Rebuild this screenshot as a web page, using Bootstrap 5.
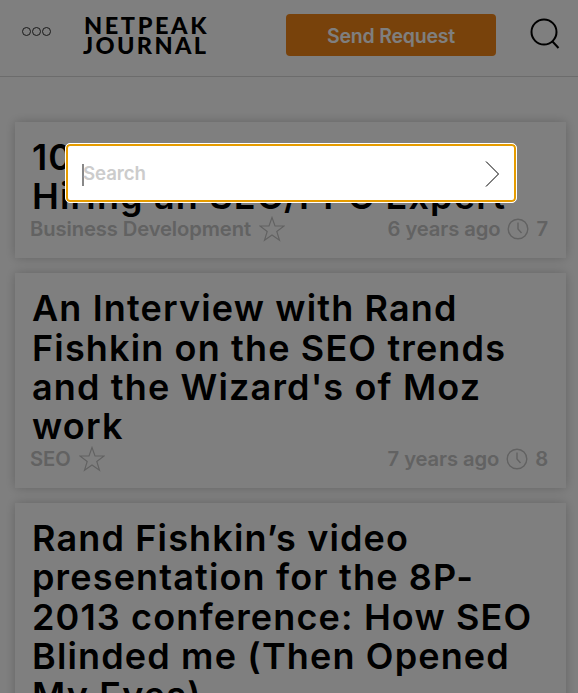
<!DOCTYPE html>
<html lang="en">
<head>
    <meta charset="UTF-8">
    <meta name="viewport" content="width=device-width, initial-scale=1.0">
    <title>Netpeak Journal</title>
    <link href="https://cdn.jsdelivr.net/npm/bootstrap@5.3.0/dist/css/bootstrap.min.css" rel="stylesheet">
    <style>
        html, body { height: 100%; overflow: hidden; }
        body {
            background-color: #fff;
            color: #000;
            font-family: "Inter", "Liberation Sans", sans-serif;
        }
        .top-bar {
            height: 77px;
            border-bottom: 1px solid #d9d9d9;
            padding: 14px 18px 0 22px;
        }
        .dots { width: 30px; gap: 1px; margin-top: 13px; }
        .dots i { width: 9px; height: 9px; border: 1px solid #333; border-radius: 50%; display: block; }
        .logo {
            font-family: "Lato", sans-serif;
            font-weight: 900;
            font-size: 23.5px;
            line-height: 20px;
            letter-spacing: 2.6px;
            margin-left: 32px;
            margin-top: 1px;
        }
        .logo-row2 { margin-left: -1px; letter-spacing: 2.35px; }
        .send-btn {
            width: 210px;
            height: 42px;
            margin-left: auto;
            padding-top: 4px;
            background: #f18416;
            color: #fff;
            border: 0;
            border-radius: 4px;
            font-size: 19.5px;
            font-weight: 600;
            letter-spacing: -.2px;
        }
        .search-ico { margin-left: 34px; margin-top: 4px; }
        .post-list { padding: 45px 12px 0 15px; gap: 15px; }
        .post-card {
            border: 0;
            border-radius: 0;
            background: #fff;
            padding: 16px 18px 16px 17px;
            box-shadow: 0 0 10px rgba(0,0,0,.22);
        }
        .post-title {
            font-family: "Inter", sans-serif;
            font-size: 36px;
            font-weight: 600;
            line-height: 39.2px;
            letter-spacing: 1.15px;
            margin: 0;
        }
        .post-meta {
            color: #c4c4c4;
            font-size: 20.2px;
            font-weight: 600;
            line-height: 26px;
            letter-spacing: -.1px;
            margin-left: -2px;
        }
        .clock-ico { margin: 0 7px; }
        .dim-layer { position: fixed; inset: 0; background: rgba(0,0,0,.5); }
        .search-box {
            position: fixed;
            left: 65px;
            top: 143px;
            width: 452px;
            height: 60px;
            background: #fff;
            border: 1px solid #fff;
            border-radius: 5px;
            box-shadow: inset 0 0 0 2px #e69c00;
            padding: 2px 16px 0 16px;
        }
        .search-caret { width: 2px; height: 22px; background: #888; margin-right: -1px; margin-top: 1px; }
        .search-hint { color: #ccc; font-size: 18.7px; font-weight: 600; letter-spacing: -.1px; }
    </style>
</head>
<body>

<div class="top-bar d-flex align-items-start">
    <div class="dots d-flex"><i></i><i></i><i></i></div>
    <div class="logo"><div>NETPEAK</div><div class="logo-row2">JOURNAL</div></div>
    <button class="send-btn" type="button">Send Request</button>
    <svg class="search-ico" width="30" height="32" viewBox="0 0 30 32" fill="none" stroke="#000" stroke-width="2">
        <circle cx="14" cy="14" r="12.5"/>
        <path d="M22.5 23.5 L28.5 30"/>
    </svg>
</div>

<div class="post-list d-flex flex-column">
    <div class="card post-card">
        <h2 class="post-title">10 Reasons<br>Hiring an SEO/PPC Expert</h2>
        <div class="post-meta d-flex align-items-center">
            <span>Business Development</span>
            <svg class="ms-2" width="26" height="26" viewBox="0 0 26 26" fill="none" stroke="#c4c4c4" stroke-width="1.2"><path d="M13 1.5l3 8.5h9l-7.200 5.500 2.700 8.800-7.500-5.300-7.500 5.300 2.700-8.800L1 10h9z"/></svg>
            <span class="ms-auto">6 years ago</span>
            <svg class="clock-ico" width="22" height="22" viewBox="0 0 22 22" fill="none" stroke="#c4c4c4" stroke-width="1.400"><circle cx="11" cy="11" r="9.800"/><path d="M11 4.500V11l3.500 4"/></svg>
            <span>7</span>
        </div>
    </div>
    <div class="card post-card">
        <h2 class="post-title">An Interview with Rand Fishkin on the SEO trends and the Wizard's of Moz work</h2>
        <div class="post-meta d-flex align-items-center">
            <span>SEO</span>
            <svg class="ms-2" width="26" height="26" viewBox="0 0 26 26" fill="none" stroke="#c4c4c4" stroke-width="1.2"><path d="M13 1.5l3 8.5h9l-7.200 5.500 2.700 8.800-7.500-5.300-7.500 5.300 2.700-8.800L1 10h9z"/></svg>
            <span class="ms-auto">7 years ago</span>
            <svg class="clock-ico" width="22" height="22" viewBox="0 0 22 22" fill="none" stroke="#c4c4c4" stroke-width="1.400"><circle cx="11" cy="11" r="9.800"/><path d="M11 4.500V11l3.500 4"/></svg>
            <span>8</span>
        </div>
    </div>
    <div class="card post-card">
        <h2 class="post-title">Rand Fishkin’s video presentation for the 8P-2013 conference: How SEO Blinded me (Then Opened My Eyes)</h2>
    </div>
</div>

<div class="dim-layer"></div>

<div class="search-box d-flex align-items-center">
    <span class="search-caret"></span>
    <span class="search-hint">Search</span>
    <svg class="ms-auto" width="15" height="26" viewBox="0 0 15 26" fill="none" stroke="#000" stroke-width="1"><path d="M1 .5 L13.500 13 L1 25.500"/></svg>
</div>

</body>
</html>
